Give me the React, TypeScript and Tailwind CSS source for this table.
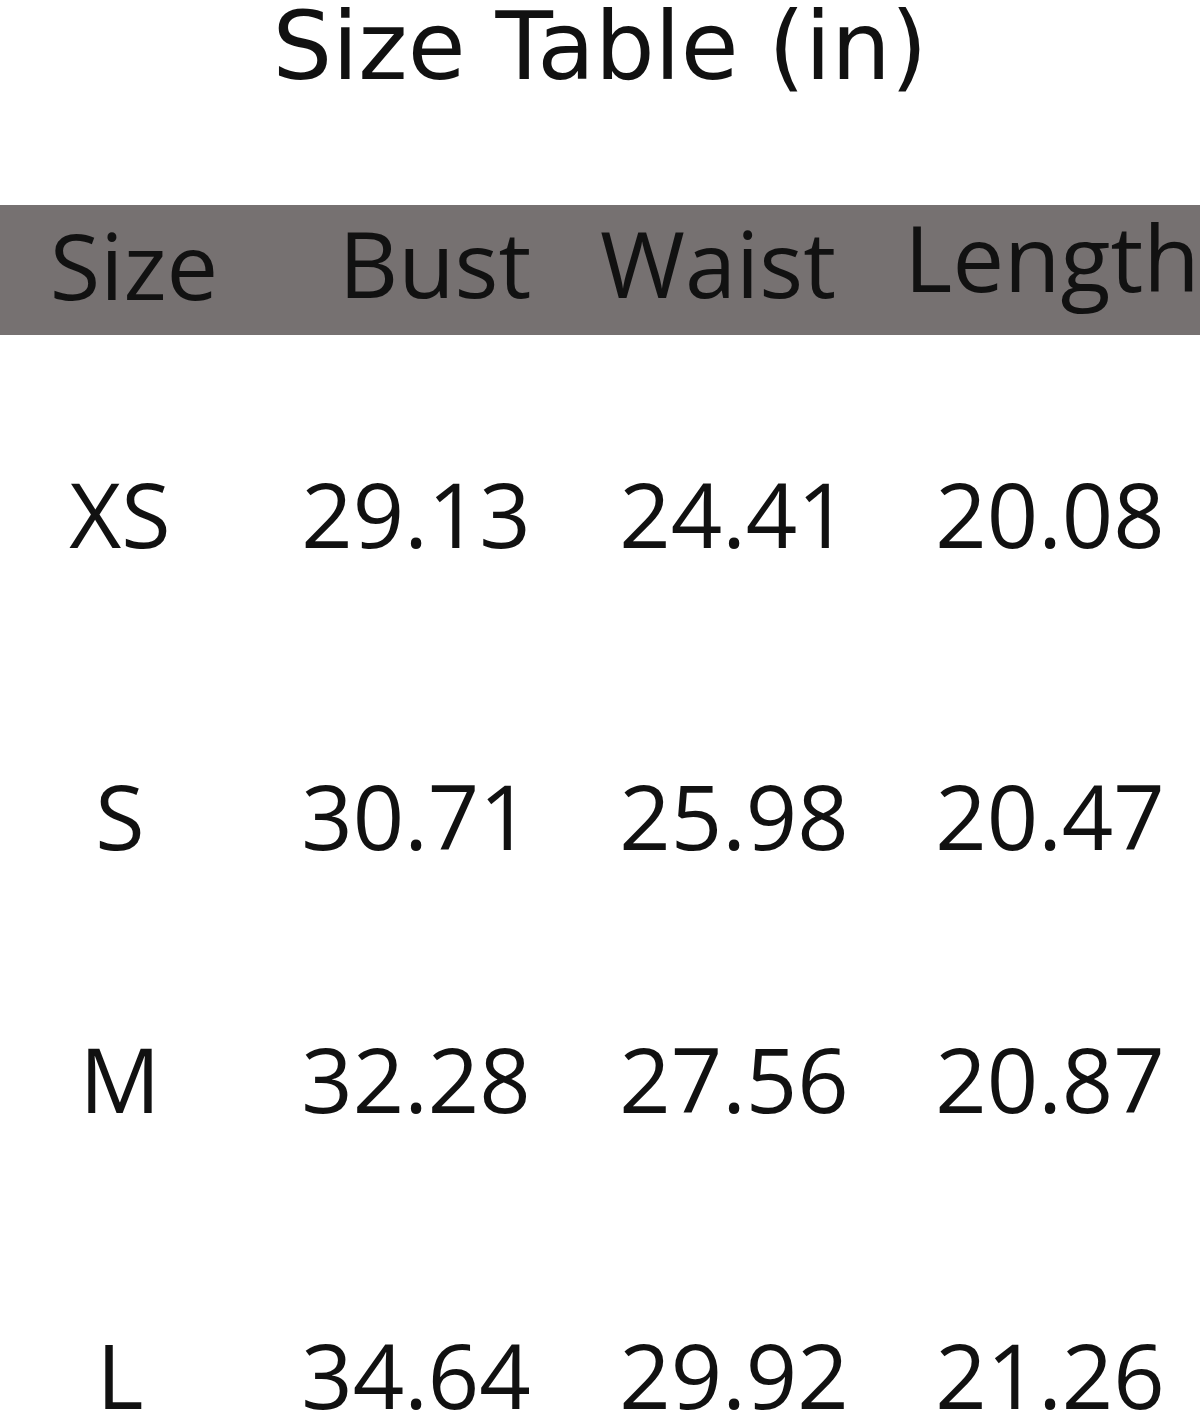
const header = [
  { label: 'Size', cls: 'pl-[28px] pt-[14px]' },
  { label: 'Bust', cls: 'pl-[44px] pt-[12px]' },
  { label: 'Waist', cls: 'pr-[20px] pt-[12px]' },
  { label: 'Length', cls: 'pl-[34px] pt-[6px]' },
];

const rows = [
  { size: 'XS', vals: ['29.13', '24.41', '20.08'], h: 'h-[302px]' },
  { size: 'S', vals: ['30.71', '25.98', '20.47'], h: 'h-[263px]' },
  { size: 'M', vals: ['32.28', '27.56', '20.87'], h: 'h-[296px]' },
  { size: 'L', vals: ['34.64', '29.92', '21.26'], h: 'h-[120px]' },
];

const cols = 'grid grid-cols-[240px_346px_284px_330px]';

export default function App() {
  return (
    <div className="w-[1200px] h-[1413px] overflow-hidden bg-white text-[#111]">
      <h1
        className="h-[110px] text-center text-[94px] leading-[110px] -mt-[8px] whitespace-nowrap"
        style={{ fontFamily: '"Comic Sans MS", "DejaVu Sans", sans-serif' }}
      >
        Size Table (in)
      </h1>

      <div
        className="mt-[103px]"
        style={{ fontFamily: '"Open Sans", "Noto Sans", sans-serif' }}
      >
        {/* header bar */}
        <div className={`${cols} h-[130px] bg-[#767171]`}>
          {header.map((c) => (
            <div
              key={c.label}
              className={`text-center text-[92px] leading-none whitespace-nowrap ${c.cls}`}
            >
              {c.label}
            </div>
          ))}
        </div>

        {/* first row starts below the bar */}
        <div className="mt-[133px]">
          {rows.map((r) => (
            <div key={r.size} className={`${cols} ${r.h} text-[90px] leading-none`}>
              <div className="text-center">{r.size}</div>
              <div className="text-center pl-[6px]">{r.vals[0]}</div>
              <div className="text-center pl-[12px]">{r.vals[1]}</div>
              <div className="text-center pl-[30px]">{r.vals[2]}</div>
            </div>
          ))}
        </div>
      </div>
    </div>
  );
}
